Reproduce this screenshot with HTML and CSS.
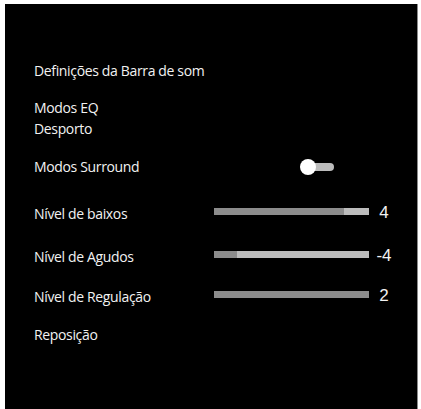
FILE: index.html
```html
<!DOCTYPE html>
<html lang="pt">
<head>
<meta charset="UTF-8" />
<meta name="viewport" content="width=device-width, initial-scale=1" />
<title>Definições da Barra de som</title>
<link rel="stylesheet" href="styles.css">
</head>
<body>
<div class="screen">
  <div class="menu">
    <div class="item title">Definições da Barra de som</div>

    <div class="item eq">
      <div>Modos EQ</div>
      <div>Desporto</div>
    </div>

    <div class="item row surround">
      <span class="label">Modos Surround</span>
      <span class="toggle"><span class="knob"></span></span>
    </div>

    <div class="item row bass">
      <span class="label">Nível de baixos</span>
      <span class="track"><span class="fill" style="width:84%"></span></span>
      <span class="value">4</span>
    </div>

    <div class="item row treble">
      <span class="label">Nível de Agudos</span>
      <span class="track"><span class="fill" style="width:15%"></span></span>
      <span class="value">-4</span>
    </div>

    <div class="item row balance">
      <span class="label">Nível de Regulação</span>
      <span class="track"><span class="fill" style="width:100%"></span></span>
      <span class="value">2</span>
    </div>

    <div class="item reset">Reposição</div>
  </div>
</div>
</body>
</html>
```

FILE: styles.css
```css
:root {
  --panel-bg: #000;
  --text-color: #f2f2f2;
  --track-light: #bcbcbc;
  --track-dark: #8c8c8c;
}
body {
  margin: 0;
  padding: 0;
  background: #fff;
  font-family: "Open Sans", "Noto Sans", sans-serif;
}
.screen {
  margin: 4px 3px 0 5px;
  height: 405px;
  background: var(--panel-bg);
  border-right: 1px solid #8a8a8a;
  box-sizing: border-box;
}
.menu {
  padding: 57px 0 0 29px;
  color: var(--text-color);
  font-size: 14px;
  line-height: 20px;
  letter-spacing: -0.35px;
}
.eq {
  margin-top: 16px;
  line-height: 21px;
}
.row {
  display: flex;
  align-items: center;
  height: 20px;
}
.label {
  width: 180px;
  flex: none;
}
.surround { margin-top: 18px; }
.bass { margin-top: 27px; }
.treble { margin-top: 23px; }
.balance { margin-top: 20px; }
.reset { margin-top: 18px; }

.toggle {
  position: relative;
  margin-left: 86px;
  width: 34px;
  height: 16px;
}
.toggle::before {
  content: "";
  position: absolute;
  left: 10px;
  top: 4px;
  width: 24px;
  height: 8px;
  border-radius: 4px;
  background: var(--track-light);
}
.knob {
  position: absolute;
  left: 0;
  top: 0;
  width: 16px;
  height: 16px;
  border-radius: 50%;
  background: #fff;
}
.track {
  width: 155px;
  height: 7px;
  margin-bottom: 5px;
  background: var(--track-light);
  display: flex;
}
.fill {
  background: var(--track-dark);
  height: 100%;
}
.value {
  width: 22px;
  margin-left: 4px;
  margin-bottom: 2px;
  text-align: center;
  font-family: "Liberation Sans", Arial, sans-serif;
  font-size: 17px;
  letter-spacing: 0;
}
```
